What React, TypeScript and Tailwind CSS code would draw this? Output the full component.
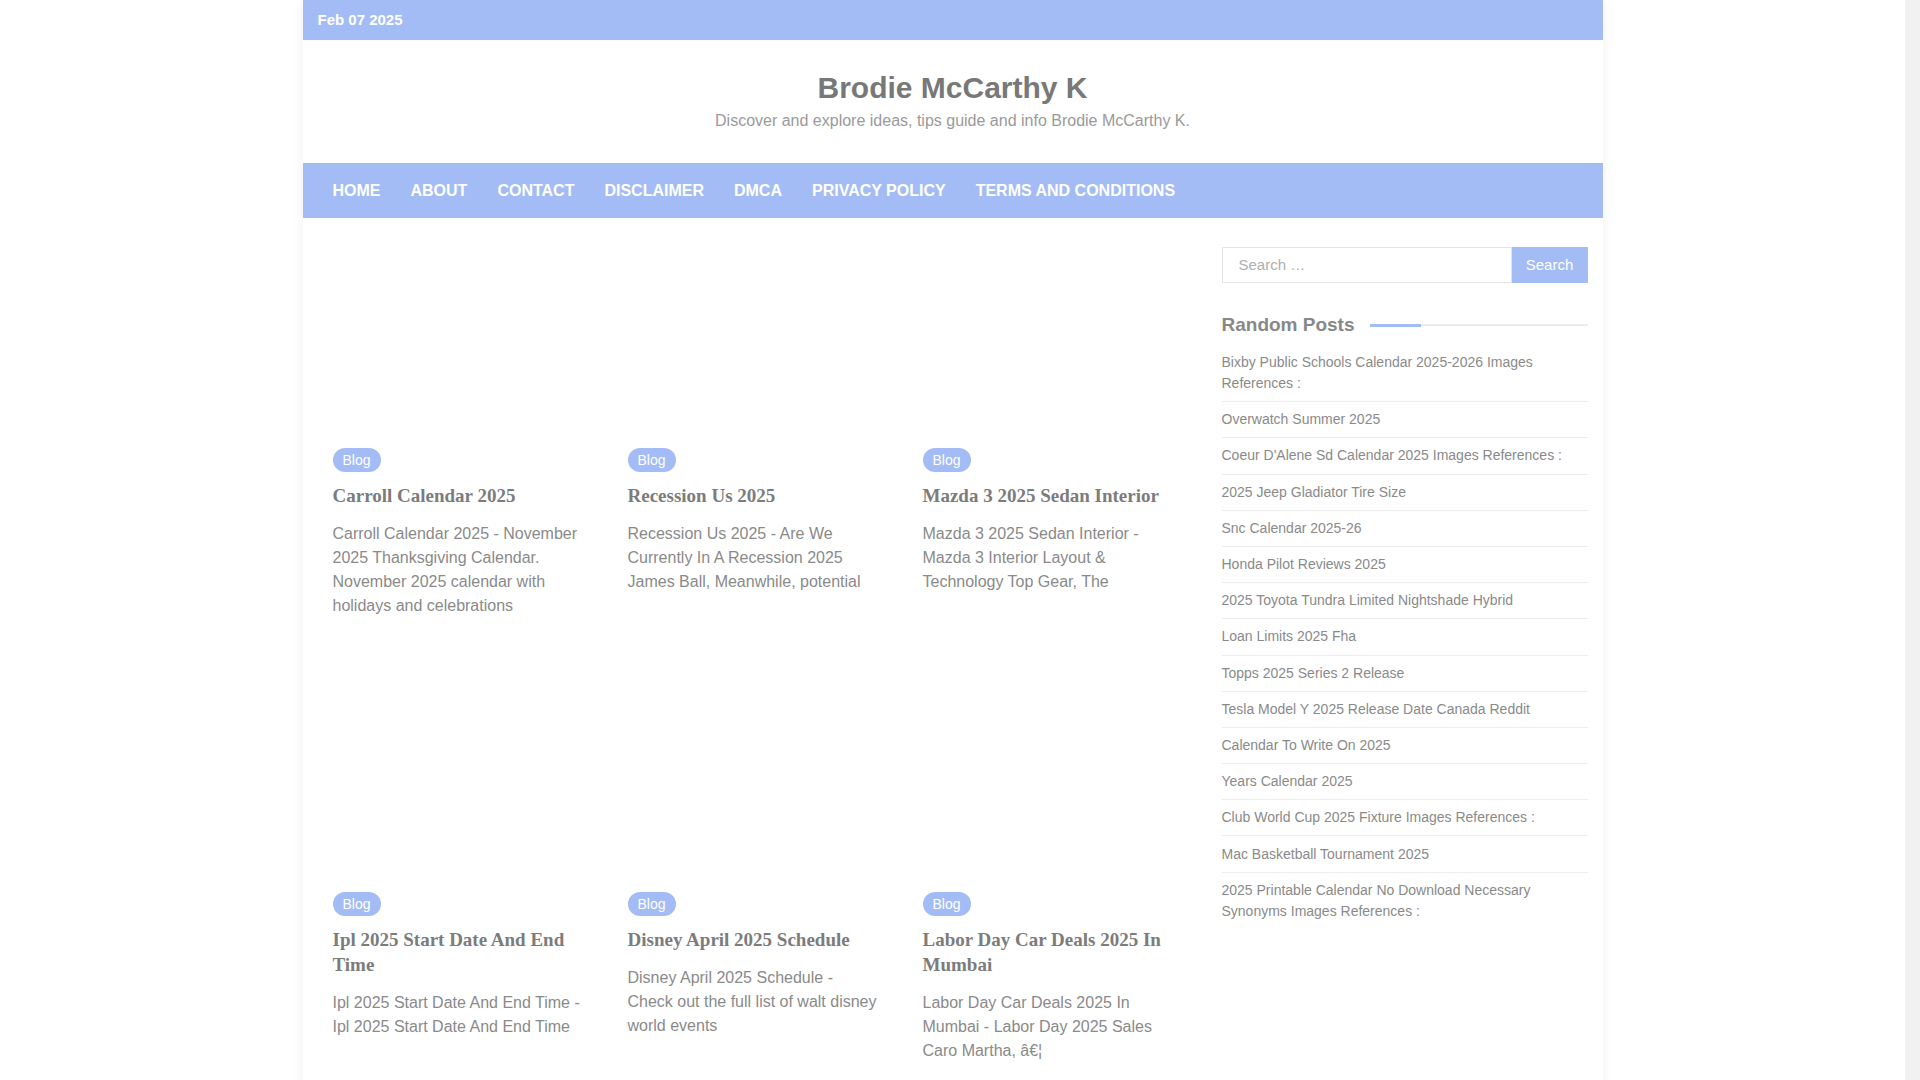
import React from "react"

const navItems = ["Home", "About", "Contact", "Disclaimer", "DMCA", "Privacy Policy", "Terms and Conditions"]

const posts = [
  {
    title: "Carroll Calendar 2025",
    excerpt: "Carroll Calendar 2025 - November 2025 Thanksgiving Calendar. November 2025 calendar with holidays and celebrations",
  },
  {
    title: "Recession Us 2025",
    excerpt: "Recession Us 2025 - Are We Currently In A Recession 2025 James Ball, Meanwhile, potential",
  },
  {
    title: "Mazda 3 2025 Sedan Interior",
    excerpt: "Mazda 3 2025 Sedan Interior - Mazda 3 Interior Layout & Technology Top Gear, The",
  },
  {
    title: "Ipl 2025 Start Date And End Time",
    excerpt: "Ipl 2025 Start Date And End Time - Ipl 2025 Start Date And End Time",
  },
  {
    title: "Disney April 2025 Schedule",
    excerpt: "Disney April 2025 Schedule - Check out the full list of walt disney world events",
  },
  {
    title: "Labor Day Car Deals 2025 In Mumbai",
    excerpt: "Labor Day Car Deals 2025 In Mumbai - Labor Day 2025 Sales Caro Martha,  â€¦",
  },
]

const randomPosts = [
  "Bixby Public Schools Calendar 2025-2026 Images References :",
  "Overwatch Summer 2025",
  "Coeur D'Alene Sd Calendar 2025 Images References :",
  "2025 Jeep Gladiator Tire Size",
  "Snc Calendar 2025-26",
  "Honda Pilot Reviews 2025",
  "2025 Toyota Tundra Limited Nightshade Hybrid",
  "Loan Limits 2025 Fha",
  "Topps 2025 Series 2 Release",
  "Tesla Model Y 2025 Release Date Canada Reddit",
  "Calendar To Write On 2025",
  "Years Calendar 2025",
  "Club World Cup 2025 Fixture Images References :",
  "Mac Basketball Tournament 2025",
  "2025 Printable Calendar No Download Necessary Synonyms Images References :",
]

function PostCard({ title, excerpt }: { title: string; excerpt: string }) {
  return (
    <article className="flex flex-col items-start">
      {/* thumbnail didn't load */}
      <div className="h-[190px] w-full mb-[11px]" />
      <a href="#" className="h-[24px] px-[10px] rounded-full bg-[#a3bcf5] text-white text-[14px] leading-[24px]">
        Blog
      </a>
      <h2 className="mt-[11px] text-[19px] leading-[25px] font-bold text-[#7c7c7c] font-['Liberation_Serif','Times_New_Roman',serif]">
        {title}
      </h2>
      <p className="mt-[14px] text-[16px] leading-[24px] text-[#8a8a8a]">{excerpt}</p>
    </article>
  )
}

export default function App() {
  return (
    <div className="min-h-screen bg-white pr-[15px] font-['Liberation_Sans',Arial,sans-serif]">
      <div className="w-[1300px] mx-auto bg-white shadow-[0_0_12px_rgba(0,0,0,0.06)]">
        {/* Top bar */}
        <div className="h-[40px] bg-[#a3bcf5] px-[15px] flex items-center">
          <span className="text-white font-bold text-[15px]">Feb 07 2025</span>
        </div>

        {/* Header */}
        <header className="h-[123px] pt-[30px] flex flex-col items-center">
          <h1 className="text-[30px] leading-[36px] font-bold text-[#787878]">Brodie McCarthy K</h1>
          <p className="mt-[4px] text-[16px] leading-[22px] text-[#9a9a9a]">
            Discover and explore ideas, tips guide and info Brodie McCarthy K.
          </p>
        </header>

        {/* Navbar */}
        <nav className="h-[55px] bg-[#a3bcf5] px-[15px] flex items-center">
          {navItems.map((item) => (
            <a key={item} href="#" className="px-[15px] text-white font-bold text-[16px] uppercase">
              {item}
            </a>
          ))}
        </nav>

        {/* Content */}
        <div className="flex pt-[29px] pl-[30px] pr-[15px] pb-[80px] gap-[44px]">
          <main className="w-[845px] grid grid-cols-3 gap-x-[40px] gap-y-[73px] content-start">
            {posts.map((p) => (
              <PostCard key={p.title} {...p} />
            ))}
          </main>

          <aside className="w-[366px]">
            <form className="flex h-[36px]">
              <input
                type="text"
                placeholder="Search …"
                className="flex-1 min-w-0 border border-[#e4e4e4] px-[16px] text-[15px] text-[#777] placeholder:text-[#b0b0b0] outline-none"
              />
              <button type="button" className="w-[76px] bg-[#a3bcf5] text-white text-[15px]">
                Search
              </button>
            </form>

            <div className="mt-[30px] flex items-center gap-[15px]">
              <h3 className="text-[19px] leading-[24px] font-bold text-[#888]">Random Posts</h3>
              <div className="flex-1 flex items-center">
                <div className="w-[51px] h-[3px] bg-[#a3bcf5]" />
                <div className="flex-1 h-[2px] bg-[#ececec]" />
              </div>
            </div>

            <ul className="mt-[8px]">
              {randomPosts.map((t, i) => (
                <li
                  key={t}
                  className={`py-[7.1px] text-[14px] leading-[21px] text-[#8a8a8a] ${
                    i < randomPosts.length - 1 ? "border-b border-[#ececec]" : ""
                  }`}
                >
                  <a href="#">{t}</a>
                </li>
              ))}
            </ul>
          </aside>
        </div>
      </div>

      {/* browser scrollbar track */}
      <div className="fixed top-0 right-0 w-[15px] h-screen bg-[#f1f1f1]" />
    </div>
  )
}
